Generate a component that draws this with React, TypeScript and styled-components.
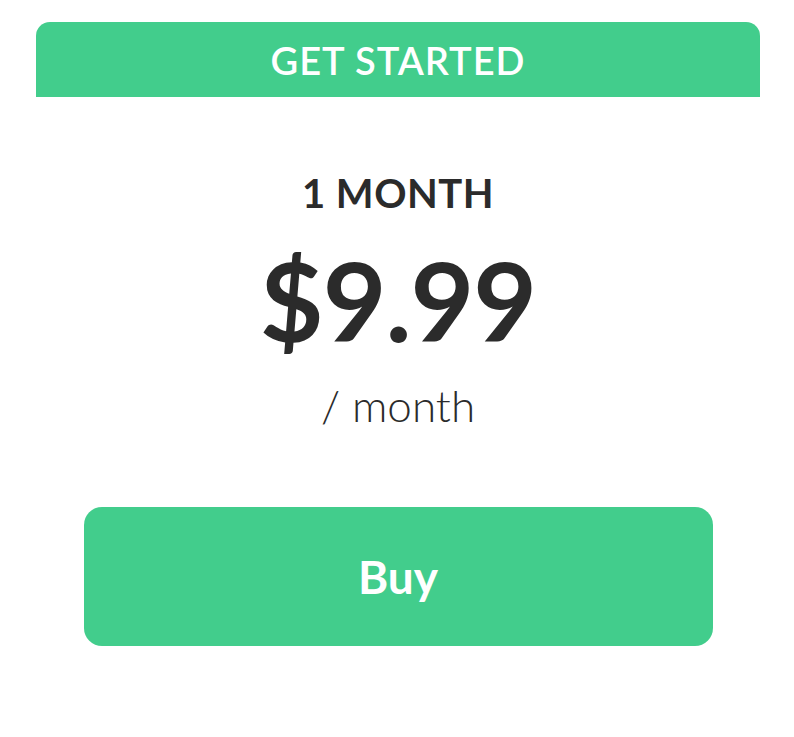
import React from "react";
import styled, { createGlobalStyle } from "styled-components";

const Global = createGlobalStyle`
  html, body { margin: 0; padding: 0; background: #ffffff; }
  body { font-family: "Lato", "Noto Sans", sans-serif; }
`;

const Card = styled.div`
  width: 724px;
  margin: 22px 0 0 36px;
  display: flex;
  flex-direction: column;
  align-items: center;
  background: #ffffff;
`;

const Header = styled.div`
  align-self: stretch;
  height: 75px;
  background: #42cd8c;
  border-radius: 14px 14px 0 0;
  display: flex;
  align-items: center;
  justify-content: center;
  color: #ffffff;
  font-size: 38px;
  font-weight: 600;
  letter-spacing: 1px;
  line-height: 1;
`;

const Plan = styled.div`
  margin-top: 76px;
  color: #2b2b2b;
  font-size: 40px;
  font-weight: 700;
  line-height: 1;
  letter-spacing: 0.5px;
`;

const Price = styled.div`
  margin-top: 31px;
  color: #2b2b2b;
  font-size: 110px;
  font-weight: 700;
  line-height: 1;
  letter-spacing: -1px;
`;

const Period = styled.div`
  margin-top: 29px;
  color: #2b2b2b;
  font-size: 44px;
  font-weight: 300;
  line-height: 1;
`;

const BuyButton = styled.button`
  margin-top: 80px;
  width: 629px;
  height: 139px;
  border: none;
  border-radius: 18px;
  background: #42cd8c;
  color: #ffffff;
  font-family: "Lato", "Noto Sans", sans-serif;
  font-size: 46px;
  font-weight: 700;
  cursor: pointer;
`;

export default function App() {
  return (
    <>
      <Global />
      <Card>
        <Header>GET STARTED</Header>
        <Plan>1 MONTH</Plan>
        <Price>$9.99</Price>
        <Period>/ month</Period>
        <BuyButton>Buy</BuyButton>
      </Card>
    </>
  );
}
